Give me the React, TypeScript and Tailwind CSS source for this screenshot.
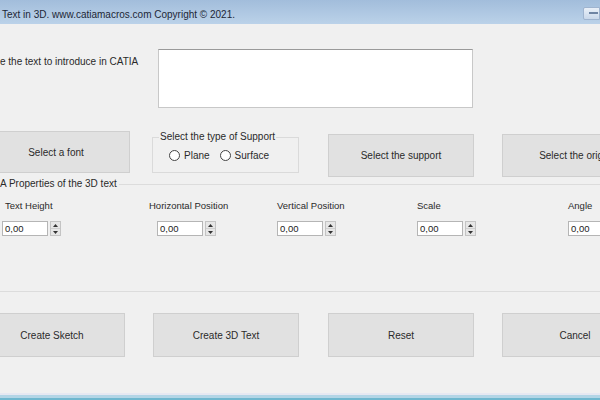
import React from 'react';

const font = { fontFamily: '"Liberation Sans", Arial, sans-serif' };

const WinButton: React.FC<{ label: string; className?: string }> = ({ label, className = '' }) => (
  <button
    className={`flex items-center justify-center bg-[#e1e1e1] border border-[#cfcfcf] text-[10px] text-[#2a2a2a] shrink-0 whitespace-nowrap ${className}`}
  >
    {label}
  </button>
);

const Radio: React.FC<{ label: string }> = ({ label }) => (
  <label className="flex items-center gap-[4px] text-[10px] text-[#2a2a2a]">
    <span className="w-[11px] h-[11px] rounded-full border border-[#444] bg-white" />
    {label}
  </label>
);

const Spin: React.FC<{ className?: string }> = ({ className = '' }) => (
  <div className={`flex items-center h-[15px] w-[59px] shrink-0 ${className}`}>
    <div className="h-full w-[46px] bg-white border border-[#b5b5b5] text-[9.5px] text-[#222] leading-[13px] pl-[2px]">
      0,00
    </div>
    <div className="ml-[2px] h-full w-[11px] flex flex-col border border-[#c4c4c4] bg-[#e6e6e6]">
      <div className="flex-1 flex items-center justify-center border-b border-[#cfcfcf]">
        <svg width="5" height="3" viewBox="0 0 5 3"><path d="M0 3 L2.5 0 L5 3 Z" fill="#333" /></svg>
      </div>
      <div className="flex-1 flex items-center justify-center">
        <svg width="5" height="3" viewBox="0 0 5 3"><path d="M0 0 L2.5 3 L5 0 Z" fill="#333" /></svg>
      </div>
    </div>
  </div>
);

const Prop: React.FC<{ label: string; className?: string; spinOffset?: string }> = ({ label, className = '', spinOffset = '' }) => (
  <div className={`flex flex-col shrink-0 ${className}`}>
    <span className="text-[9.5px] text-[#2a2a2a] leading-[12px] h-[12px] whitespace-nowrap">{label}</span>
    <Spin className={`mt-[9px] ${spinOffset}`} />
  </div>
);

export default function App() {
  return (
    <div className="w-[600px] h-[400px] overflow-hidden bg-[#f0f0f0] flex flex-col" style={font}>
      {/* title bar */}
      <div className="h-[24px] shrink-0 flex items-center justify-between bg-gradient-to-b from-[#a2bddb] to-[#bbd2e9]">
        <span className="pl-[2px] pt-[4px] text-[10px] text-[#1d2736]">
          Text in 3D. www.catiamacros.com Copyright © 2021.
        </span>
        <div className="mt-[2px] w-[17px] h-[13px] bg-gradient-to-b from-[#e9f0f8] to-[#c9d8ea] border border-[#9fb4cf] rounded-l-[2px] flex items-center justify-center">
          <div className="w-[9px] h-[2px] bg-white border border-[#6d84a3] ml-[4px]" />
        </div>
      </div>

      {/* text row */}
      <div className="flex mt-[25px] shrink-0">
        <span className="w-[158px] pt-[5px] text-[10px] text-[#2a2a2a]">e the text to introduce in CATIA</span>
        <div className="w-[315px] h-[59px] bg-white border border-[#c8c8c8] border-t-[#9a9a9a]" />
      </div>

      {/* selection row */}
      <div className="flex items-start mt-[23px] shrink-0">
        <WinButton label="Select a font" className="-ml-[18px] w-[148px] h-[42px]" />
        <fieldset className="ml-[22px] w-[147px] h-[42px] shrink-0 border border-[#dadada] px-[10px]">
          <legend className="ml-[-4px] px-[1px] text-[10px] text-[#2a2a2a] leading-[12px] whitespace-nowrap">
            Select the type of Support
          </legend>
          <div className="flex items-center gap-[10px] mt-[5px] pl-[6px]">
            <Radio label="Plane" />
            <Radio label="Surface" />
          </div>
        </fieldset>
        <WinButton label="Select the support" className="ml-[29px] mt-[3px] w-[146px] h-[43px]" />
        <WinButton label="Select the origin" className="ml-[28px] mt-[3px] w-[146px] h-[43px]" />
      </div>

      {/* properties group */}
      <fieldset className="mt-[1px] h-[114px] border-t border-b border-[#dcdcdc] shrink-0">
        <legend className="ml-0 pr-[2px] text-[10px] text-[#2a2a2a] leading-[12px]">A Properties of the 3D text</legend>
        <div className="flex mt-[10px]">
          <Prop label="Text Height" className="ml-[5px] w-[144px]" spinOffset="-ml-[3px]" />
          <Prop label="Horizontal Position" className="w-[128px]" spinOffset="ml-[8px]" />
          <Prop label="Vertical Position" className="w-[140px]" />
          <Prop label="Scale" className="w-[151px]" />
          <Prop label="Angle" className="w-[60px]" />
        </div>
      </fieldset>

      {/* action row */}
      <div className="flex items-start mt-[21px] shrink-0">
        <WinButton label="Create Sketch" className="-ml-[21px] w-[146px] h-[44px]" />
        <WinButton label="Create 3D Text" className="ml-[28px] w-[146px] h-[44px]" />
        <WinButton label="Reset" className="ml-[29px] w-[146px] h-[44px]" />
        <WinButton label="Cancel" className="ml-[28px] w-[146px] h-[44px]" />
      </div>

      <div className="flex-1" />
      {/* bottom edge */}
      <div className="h-[2px] bg-[#e6e8f2] shrink-0" />
      <div className="h-[3px] bg-[#b3d5e6] shrink-0" />
      <div className="h-[2px] bg-[#6fb7cf] shrink-0" />
    </div>
  );
}
